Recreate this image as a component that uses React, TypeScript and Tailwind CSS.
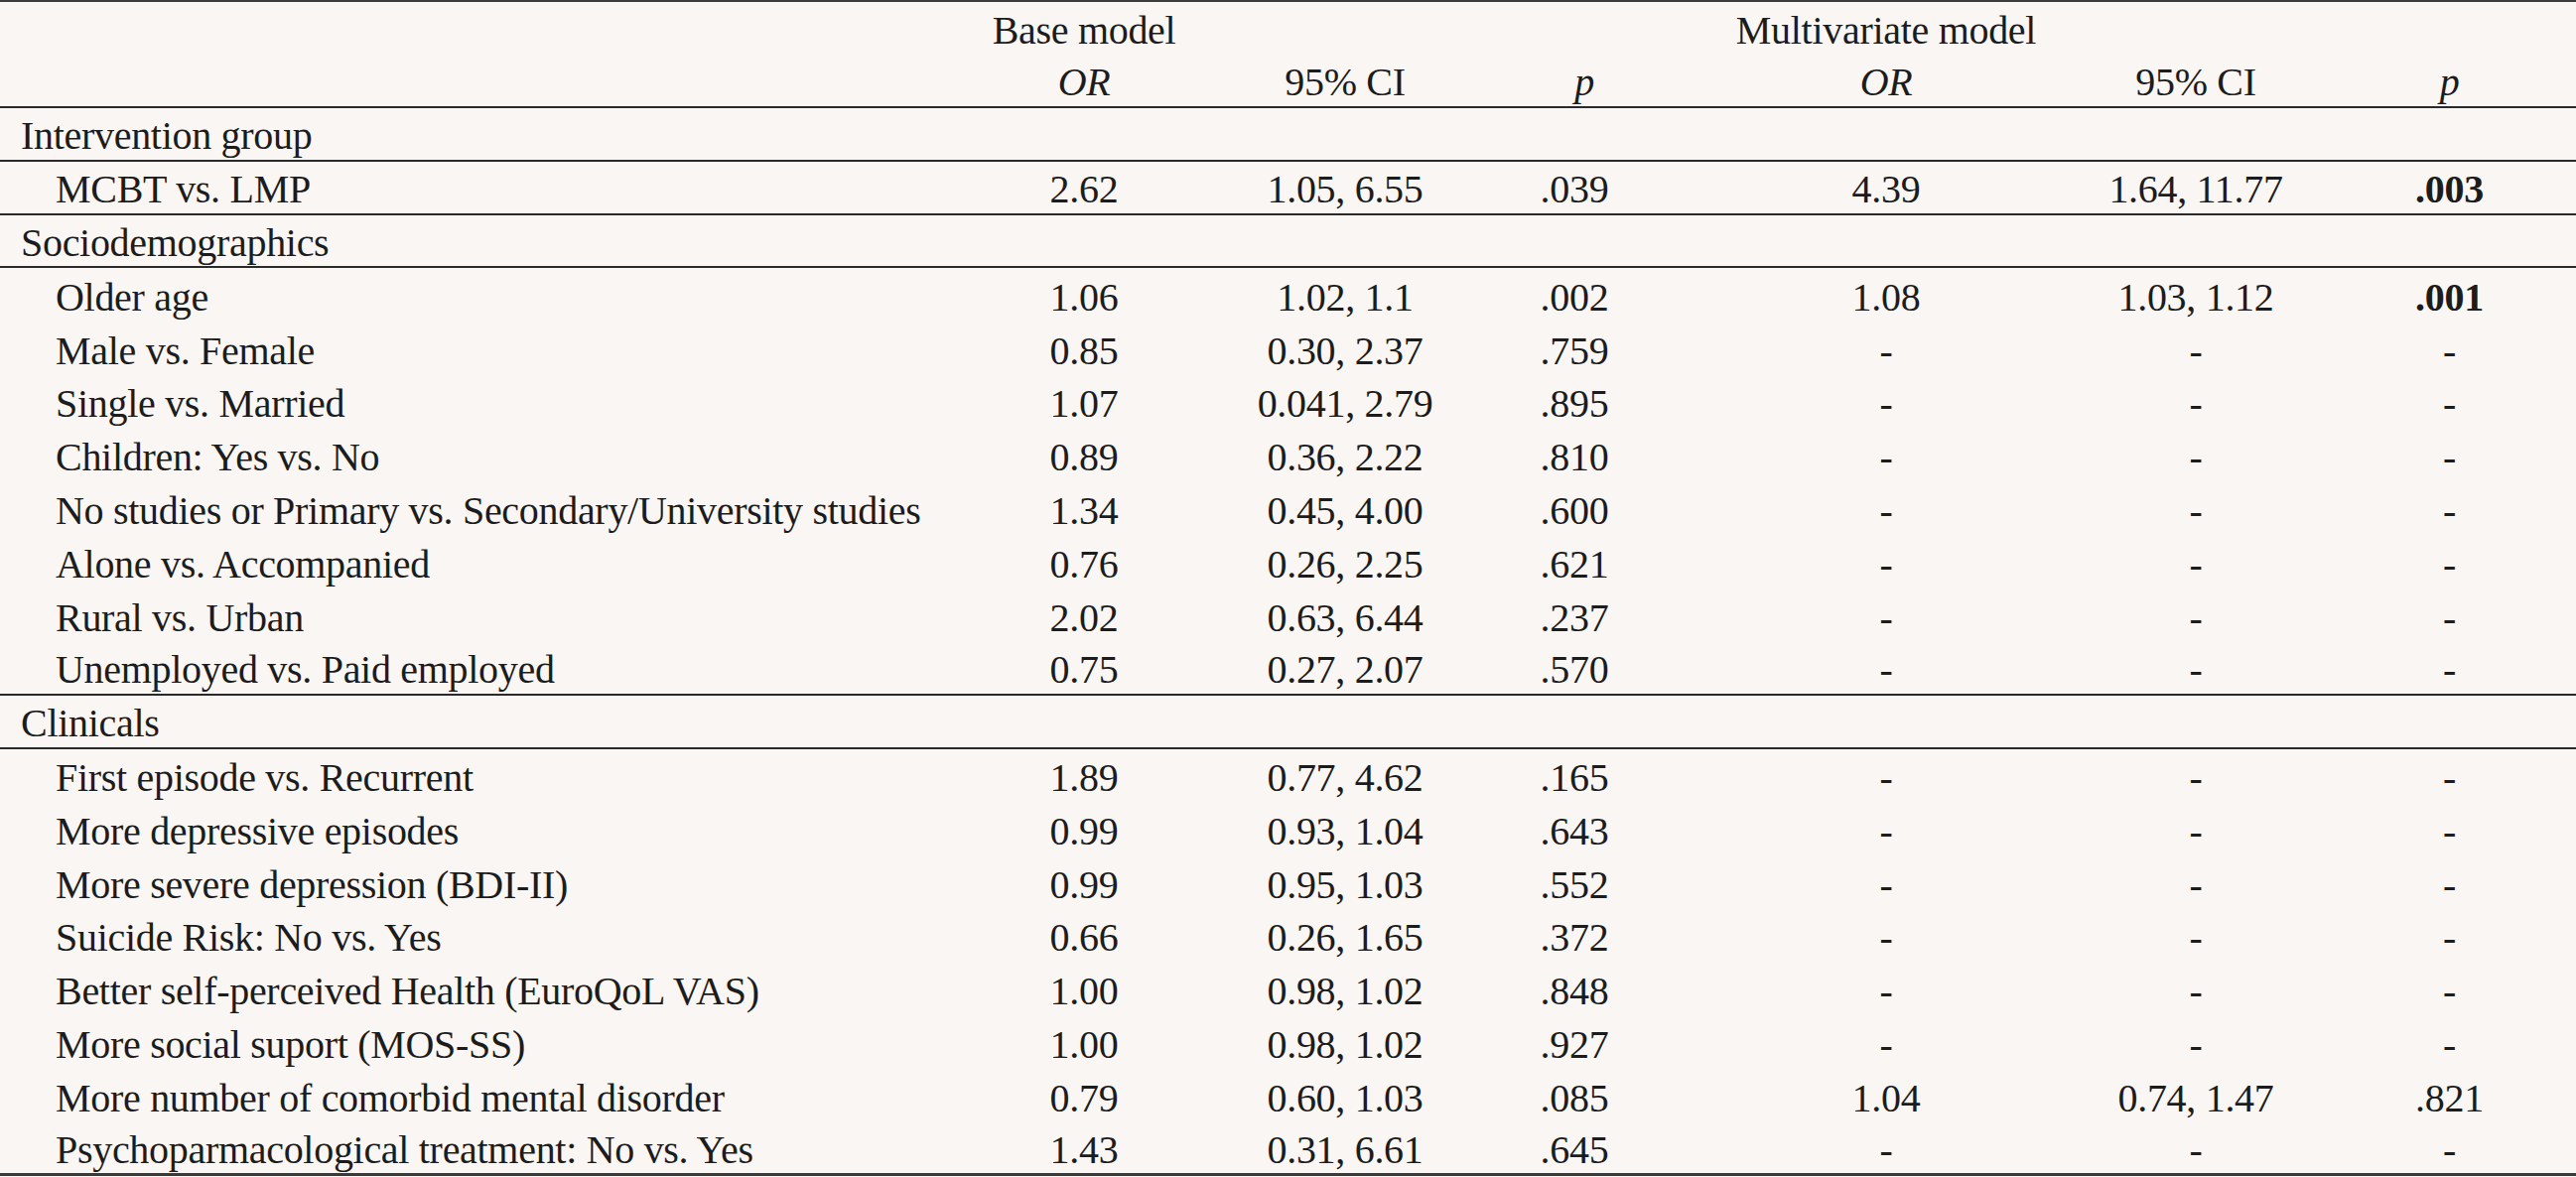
import React from "react";

type R = { label: string; v: string[]; bold?: boolean };

const socio: R[] = [
  { label: "Older age", v: ["1.06", "1.02, 1.1", ".002", "1.08", "1.03, 1.12", ".001"], bold: true },
  { label: "Male vs. Female", v: ["0.85", "0.30, 2.37", ".759", "-", "-", "-"] },
  { label: "Single vs. Married", v: ["1.07", "0.041, 2.79", ".895", "-", "-", "-"] },
  { label: "Children: Yes vs. No", v: ["0.89", "0.36, 2.22", ".810", "-", "-", "-"] },
  { label: "No studies or Primary vs. Secondary/University studies", v: ["1.34", "0.45, 4.00", ".600", "-", "-", "-"] },
  { label: "Alone vs. Accompanied", v: ["0.76", "0.26, 2.25", ".621", "-", "-", "-"] },
  { label: "Rural vs. Urban", v: ["2.02", "0.63, 6.44", ".237", "-", "-", "-"] },
  { label: "Unemployed vs. Paid employed", v: ["0.75", "0.27, 2.07", ".570", "-", "-", "-"] },
];

const clin: R[] = [
  { label: "First episode vs. Recurrent", v: ["1.89", "0.77, 4.62", ".165", "-", "-", "-"] },
  { label: "More depressive episodes", v: ["0.99", "0.93, 1.04", ".643", "-", "-", "-"] },
  { label: "More severe depression (BDI-II)", v: ["0.99", "0.95, 1.03", ".552", "-", "-", "-"] },
  { label: "Suicide Risk: No vs. Yes", v: ["0.66", "0.26, 1.65", ".372", "-", "-", "-"] },
  { label: "Better self-perceived Health (EuroQoL VAS)", v: ["1.00", "0.98, 1.02", ".848", "-", "-", "-"] },
  { label: "More social suport (MOS-SS)", v: ["1.00", "0.98, 1.02", ".927", "-", "-", "-"] },
  { label: "More number of comorbid mental disorder", v: ["0.79", "0.60, 1.03", ".085", "1.04", "0.74, 1.47", ".821"] },
  { label: "Psychoparmacological treatment: No vs. Yes", v: ["1.43", "0.31, 6.61", ".645", "-", "-", "-"] },
];

const gridCls = "grid grid-cols-[980px_224px_302px_160px_468px_156px_305px] items-center";
const cell = "flex justify-center whitespace-nowrap leading-[44px] pt-[5px]";

function DataRow({ r, border, last }: { r: R; border?: boolean; last?: boolean }) {
  return (
    <div
      className={`${gridCls} h-[53.8px] ${border ? "border-b-2 border-[#2a2a2a]" : ""} ${last ? "border-b-[3px] border-[#3a3a3a]" : ""}`}
    >
      <div className="pl-[56px] whitespace-nowrap leading-[44px] pt-[5px]">{r.label}</div>
      {r.v.map((x, i) => (
        <div
          key={i}
          className={`${cell} ${i === 5 ? "pl-[50px]" : ""} ${r.bold && i === 5 ? "font-bold" : ""}`}
        >
          {x}
        </div>
      ))}
    </div>
  );
}

function Section({ label }: { label: string }) {
  return (
    <div className={`${gridCls} h-[53.8px] border-b-2 border-[#2a2a2a]`}>
      <div className="pl-[21px] whitespace-nowrap leading-[44px] pt-[5px]">{label}</div>
    </div>
  );
}

export default function App() {
  return (
    <div className="w-[2595px] h-[1186px] overflow-hidden bg-[#faf6f3] text-[#1c1c1c] font-['Liberation_Serif',serif] text-[40px] tracking-[-0.3px]">
      <div className="border-t-2 border-[#3c3c3c]">
        <div className={`${gridCls} h-[52px]`}>
          <div />
          <div className={cell}>Base model</div>
          <div />
          <div />
          <div className={cell}>Multivariate model</div>
          <div />
          <div />
        </div>
        <div className={`${gridCls} h-[55px] border-b-2 border-[#2a2a2a]`}>
          <div />
          <div className={`${cell} italic`}>OR</div>
          <div className={cell}>95% CI</div>
          <div className={`${cell} italic pl-[20px]`}>p</div>
          <div className={`${cell} italic`}>OR</div>
          <div className={cell}>95% CI</div>
          <div className={`${cell} italic pl-[50px]`}>p</div>
        </div>
      </div>
      <Section label="Intervention group" />
      <DataRow
        r={{ label: "MCBT vs. LMP", v: ["2.62", "1.05, 6.55", ".039", "4.39", "1.64, 11.77", ".003"], bold: true }}
        border
      />
      <Section label="Sociodemographics" />
      {socio.map((r, i) => (
        <DataRow key={r.label} r={r} border={i === socio.length - 1} />
      ))}
      <Section label="Clinicals" />
      {clin.map((r, i) => (
        <DataRow key={r.label} r={r} last={i === clin.length - 1} />
      ))}
    </div>
  );
}
